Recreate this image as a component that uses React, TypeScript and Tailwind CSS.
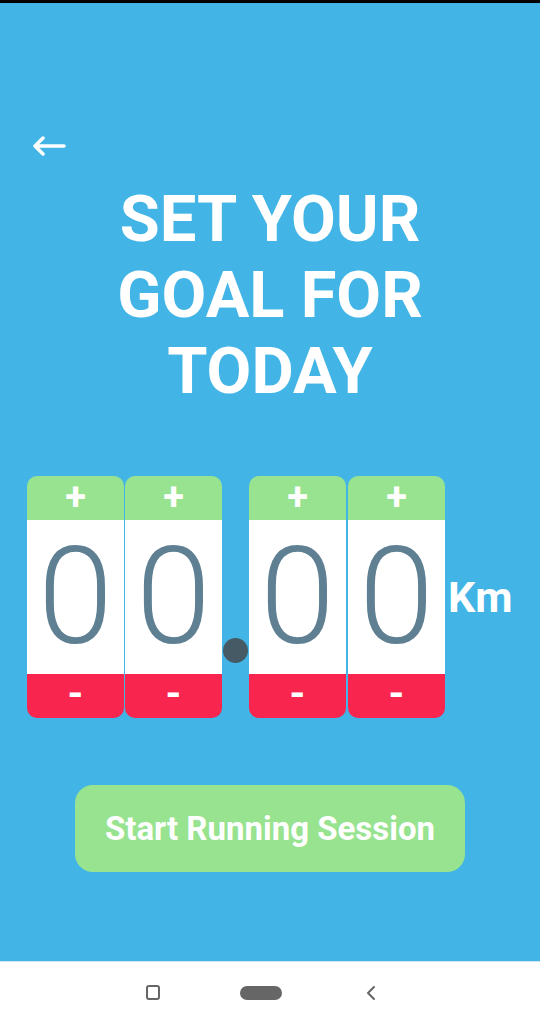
import { useState } from 'react';

type DigitProps = {
  value: number;
  onPlus: () => void;
  onMinus: () => void;
};

const DigitBox = ({ value, onPlus, onMinus }: DigitProps) => {
  return (
    <div className="flex flex-col w-[97px] h-[242px] rounded-[10px] overflow-hidden">
      <button
        className="h-[44px] bg-[#98e38f] text-white font-bold text-[38px] leading-none flex items-center justify-center pb-[2px]"
        onClick={onPlus}
      >
        +
      </button>
      <div className="flex-1 bg-white flex items-center justify-center">
        <span className="text-[135px] leading-[110px] font-light text-[#5f7f92]">{value}</span>
      </div>
      <button
        className="h-[44px] bg-[#f8264f] text-white font-bold text-[40px] leading-none flex items-center justify-center pb-[4px]"
        onClick={onMinus}
      >
        -
      </button>
    </div>
  );
};

export default function App() {
  const [digits, setDigits] = useState([0, 0, 0, 0]);

  const change = (i: number, d: number) => {
    setDigits((prev) => prev.map((v, idx) => (idx === i ? (v + d + 10) % 10 : v)));
  };

  return (
    <div className="w-[540px] h-[1025px] flex flex-col bg-[#42b4e6] font-['Roboto',sans-serif]">
      <div className="h-[3px] bg-black"></div>
      <div className="flex-1 flex flex-col">
        {/* back arrow */}
        <div className="pl-[32px] pt-[133px]">
          <svg width="34" height="20" viewBox="0 0 34 20" fill="none">
            <path
              d="M32 10H3M11 2L3 10L11 18"
              stroke="white"
              strokeWidth="3.5"
              strokeLinecap="round"
              strokeLinejoin="round"
            />
          </svg>
        </div>

        <h1 className="mt-[25px] text-center text-white font-bold text-[65px] leading-[76px]">
          SET YOUR
          <br />
          GOAL FOR
          <br />
          TODAY
        </h1>

        <div className="mt-[67px] pl-[27px] flex items-center">
          <div className="flex gap-[1px]">
            <DigitBox value={digits[0]} onPlus={() => change(0, 1)} onMinus={() => change(0, -1)} />
            <DigitBox value={digits[1]} onPlus={() => change(1, 1)} onMinus={() => change(1, -1)} />
          </div>
          <div className="w-[27px] h-[242px] flex justify-center">
            <div className="mt-[162px] w-[25px] h-[25px] rounded-full bg-[#455a64]"></div>
          </div>
          <div className="flex gap-[2px]">
            <DigitBox value={digits[2]} onPlus={() => change(2, 1)} onMinus={() => change(2, -1)} />
            <DigitBox value={digits[3]} onPlus={() => change(3, 1)} onMinus={() => change(3, -1)} />
          </div>
          <span className="ml-[3px] text-white font-bold text-[43px] leading-none">Km</span>
        </div>

        <div className="mt-[67px] flex justify-center">
          <button className="w-[390px] h-[87px] rounded-[18px] bg-[#98e38f] text-white font-bold text-[33px]">
            Start Running Session
          </button>
        </div>
      </div>

      {/* android nav bar */}
      <div className="h-[64px] bg-white border-t border-[#cfe6f2] flex items-center pl-[146px] pb-[2px]">
        <div className="w-[14px] h-[15px] border-2 border-[#666] rounded-[3px]"></div>
        <div className="ml-[80px] w-[42px] h-[14px] bg-[#666] rounded-full"></div>
        <svg className="ml-[84px]" width="10" height="16" viewBox="0 0 10 16" fill="none">
          <path d="M8 2L2 8L8 14" stroke="#666" strokeWidth="2" strokeLinecap="round" strokeLinejoin="round" />
        </svg>
      </div>
    </div>
  );
}
